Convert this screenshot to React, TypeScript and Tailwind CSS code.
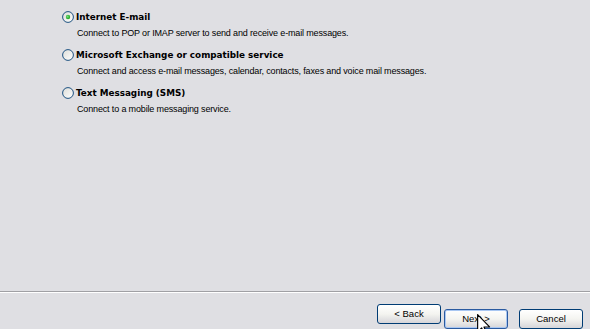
const options = [
  {
    title: "Internet E-mail",
    desc: "Connect to POP or IMAP server to send and receive e-mail messages.",
    checked: true,
  },
  {
    title: "Microsoft Exchange or compatible service",
    desc: "Connect and access e-mail messages, calendar, contacts, faxes and voice mail messages.",
    checked: false,
  },
  {
    title: "Text Messaging (SMS)",
    desc: "Connect to a mobile messaging service.",
    checked: false,
  },
];

function Radio({ checked }: { checked: boolean }) {
  return (
    <svg width="12" height="12" viewBox="0 0 12 12" className="shrink-0">
      <defs>
        <linearGradient id="rg" x1="0" y1="0" x2="1" y2="1">
          <stop offset="0" stopColor="#dcdcd7" />
          <stop offset="1" stopColor="#ffffff" />
        </linearGradient>
        <radialGradient id="dot" cx="0.4" cy="0.4" r="0.6">
          <stop offset="0" stopColor="#6fe07a" />
          <stop offset="1" stopColor="#21a121" />
        </radialGradient>
      </defs>
      <circle cx="6" cy="6" r="5.4" fill="url(#rg)" stroke="#1c5180" strokeWidth="1" />
      {checked && <circle cx="6" cy="6" r="2.2" fill="url(#dot)" />}
    </svg>
  );
}

function Cursor() {
  return (
    <svg width="14" height="22" viewBox="0 0 12 19" className="pointer-events-none absolute left-[32px] top-[4px]">
      <path
        d="M0.5 0.5 L0.5 15.5 L4 12 L6.5 18 L8.5 17 L6 11.2 L10.8 11.2 Z"
        fill="#ffffff"
        stroke="#000000"
        strokeWidth="1"
        strokeLinejoin="round"
      />
    </svg>
  );
}

function Button({ label, focused, children }: { label: string; focused?: boolean; children?: React.ReactNode }) {
  return (
    <button
      className={
        "relative h-[20px] w-[64px] rounded-[3px] border bg-gradient-to-b from-white via-[#f4f4f0] to-[#d6d5d9] font-['Liberation_Sans',sans-serif] text-[9.5px] leading-none text-black " +
        (focused ? "border-[#2a5aa0] shadow-[inset_0_0_0_1px_#a9c7f2]" : "border-[#003c74]")
      }
    >
      {label}
      {children}
    </button>
  );
}

export default function App() {
  return (
    <div className="flex h-[329px] w-[590px] flex-col overflow-hidden bg-[#dfdfe3] text-black">
      <div className="flex h-[291px] flex-col gap-[9px] pl-[62px] pt-[10px]">
        {options.map((o) => (
          <div key={o.title} className="flex flex-col">
            <div className="flex h-[14px] items-center gap-[2px]">
              <Radio checked={o.checked} />
              <span className="font-['DejaVu_Sans',sans-serif] text-[8.8px] font-bold leading-none">{o.title}</span>
            </div>
            <p className="mt-[3px] h-[12px] pl-[15px] font-['Liberation_Sans',sans-serif] text-[9px] leading-[12px] tracking-[-0.15px]">
              {o.desc}
            </p>
          </div>
        ))}
      </div>
      <div className="h-[2px] border-t border-b border-t-[#a0a0a4] border-b-white" />
      <div className="flex flex-1 items-start justify-end pr-[7px] pt-[11px]">
        <Button label="< Back" />
        <div className="ml-[3px]">
          <Button label="Next >" focused>
            <Cursor />
          </Button>
        </div>
        <div className="ml-[11px]">
          <Button label="Cancel" />
        </div>
      </div>
    </div>
  );
}
